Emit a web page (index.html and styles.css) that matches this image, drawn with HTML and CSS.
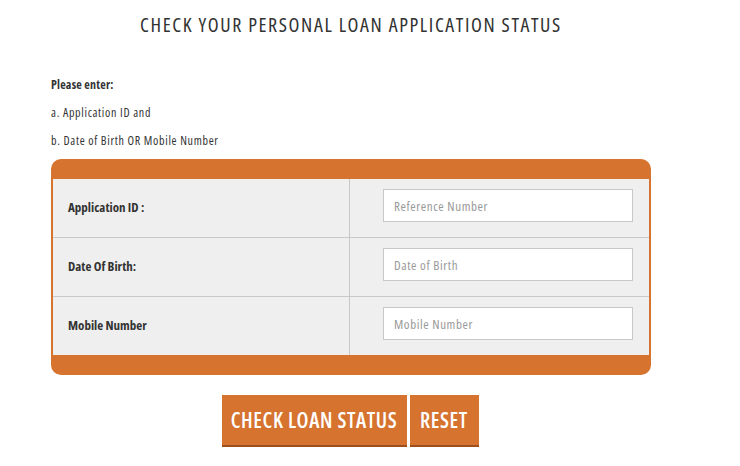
FILE: index.html
```html
<!DOCTYPE html>
<html lang="en">
<head>
<meta charset="utf-8">
<title>Check Loan Status</title>
<link rel="stylesheet" href="styles.css">
</head>
<body>
<div class="page">
  <h1 class="title">CHECK YOUR PERSONAL LOAN APPLICATION STATUS</h1>
  <div class="instructions">
    <p class="lead">Please enter:</p>
    <p>a. Application ID and</p>
    <p>b. Date of Birth OR Mobile Number</p>
  </div>
  <div class="panel">
    <div class="rows">
      <div class="row">
        <div class="label">Application ID :</div>
        <div class="field"><input class="input" type="text" placeholder="Reference Number"></div>
      </div>
      <div class="row">
        <div class="label">Date Of Birth:</div>
        <div class="field"><input class="input" type="text" placeholder="Date of Birth"></div>
      </div>
      <div class="row">
        <div class="label">Mobile Number</div>
        <div class="field"><input class="input" type="text" placeholder="Mobile Number"></div>
      </div>
    </div>
  </div>
  <div class="actions">
    <button class="btn btn-check" type="button">CHECK LOAN STATUS</button>
    <button class="btn btn-reset" type="button">RESET</button>
  </div>
</div>
</body>
</html>
```
FILE: styles.css
```css
* { box-sizing: border-box; }
html, body { margin: 0; padding: 0; background: #fff; }
body {
  font-family: "Open Sans", "DejaVu Sans Condensed", sans-serif;
  font-stretch: 75%;
  color: #333;
}
.page {
  width: 600px;
  margin-left: 51px;
}
.title {
  margin: 10px 0 0;
  font-size: 20px;
  letter-spacing: 1.6px;
  line-height: 30px;
  font-weight: normal;
  text-align: center;
  color: #333;
  white-space: nowrap;
}
.instructions {
  margin-top: 31px;
  font-size: 12px;
  letter-spacing: 0.7px;
}
.instructions p {
  margin: 0;
  line-height: 28px;
}
.instructions .lead { font-weight: bold; letter-spacing: 0.2px; }
.panel {
  margin-top: 4px;
  background: #d6732f;
  border-radius: 10px;
  padding: 20px 2px;
}
.rows { background: #efefef; }
.row {
  display: grid;
  grid-template-columns: 297px 1fr;
  height: 59px;
  border-bottom: 1px solid #c8c8c8;
}
.row:last-child { height: 58px; border-bottom: 0; }
.label {
  display: flex;
  align-items: center;
  padding-left: 15px;
  padding-bottom: 3px;
  font-size: 13px;
  font-weight: bold;
  border-right: 1px solid #c8c8c8;
}
.field {
  padding: 10px 0 0 33px;
}
.input {
  display: block;
  width: 250px;
  height: 33px;
  border: 1px solid #c8c8c8;
  background: #fff;
  padding: 0 10px;
  font-family: inherit;
  font-stretch: 75%;
  font-size: 13px;
  letter-spacing: 0.6px;
  color: #555;
}
.input::placeholder { color: #999; }
.actions {
  display: flex;
  justify-content: center;
  gap: 3px;
  margin-top: 20px;
  padding-right: 2px;
}
.btn {
  height: 52px;
  border: 0;
  border-bottom: 2px solid #9c4f1c;
  background: #d6732f;
  color: #fff;
  font-family: inherit;
  font-stretch: 75%;
  font-size: 21px;
  font-weight: 600;
  letter-spacing: 0.6px;
  padding: 0;
  white-space: nowrap;
}
.btn-check { width: 185px; }
.btn-reset { width: 69px; }
```
